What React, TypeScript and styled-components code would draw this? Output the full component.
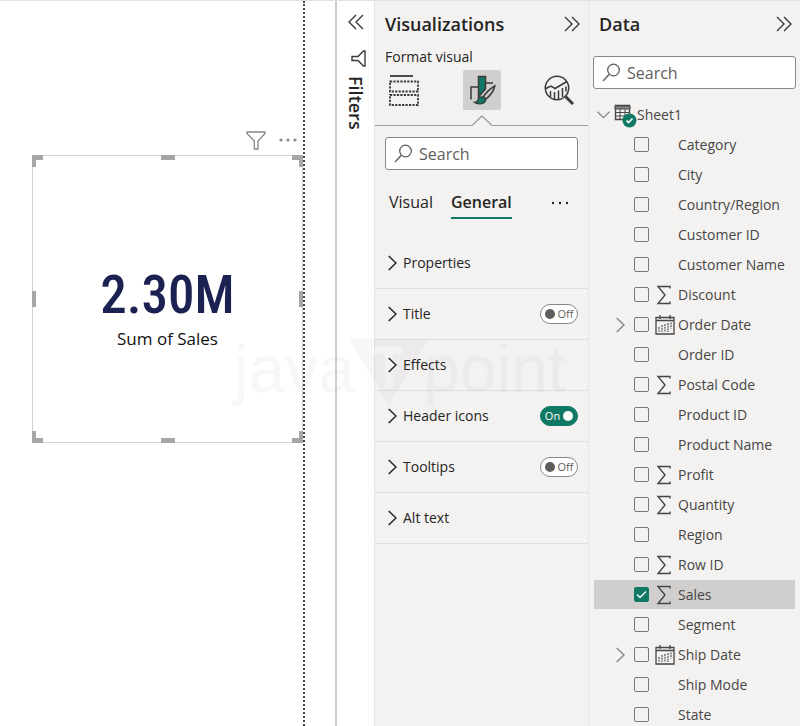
import React from "react";
import styled, { createGlobalStyle } from "styled-components";

const Global = createGlobalStyle`
  *, *::before, *::after { box-sizing: border-box; }
  body { margin: 0; background: #fff; font-family: "Open Sans", "Noto Sans", sans-serif; color: #252423; }
  button, input { font: inherit; color: inherit; }
  button { padding: 0; border: 0; background: none; cursor: pointer; }
  h2, p, ul { margin: 0; padding: 0; list-style: none; }
  svg { display: block; }
`;

const Layout = styled.div`
  position: relative;
  display: grid;
  grid-template-columns: minmax(0, 1fr) 37px 214px 212px;
  height: 100vh;
  overflow: hidden;
  border-top: 1px solid #e3e2e1;
`;

const Canvas = styled.main`
  display: flex;
  padding-right: 30px;
  border-right: 2px solid #cfcfcf;
`;

const Sheet = styled.div`
  flex: 1;
  padding: 128px 0 0 32px;
  border-right: 2px dotted #444;
`;

const VisualHeader = styled.div`
  display: flex;
  justify-content: flex-end;
  align-items: center;
  gap: 13px;
  height: 26px;
  padding: 0 6px 4px 0;
  color: #8a8886;
`;

const Card = styled.section`
  position: relative;
  display: flex;
  flex-direction: column;
  align-items: center;
  justify-content: center;
  height: 288px;
  padding-top: 20px;
  border: 1px solid #d2d2d2;
`;

const CardValue = styled.p`
  font-family: "Roboto Condensed", Roboto, sans-serif;
  font-size: 53px;
  font-weight: 500;
  line-height: 60px;
  color: #1b2150;
`;

const CardLabel = styled.p`
  font-size: 17px;
  line-height: 28px;
  color: #111;
`;

const Handle = styled.span<{ $x: string; $y: string; $w: number; $h: number; $edges?: string }>`
  position: absolute;
  ${(p) => p.$x};
  ${(p) => p.$y};
  width: ${(p) => p.$w}px;
  height: ${(p) => p.$h}px;
  border: 0 solid #a6a6a6;
  ${(p) => (p.$edges ? `border-width: ${p.$edges}` : "background: #a6a6a6")};
`;

const FiltersPane = styled.aside`
  display: flex;
  flex-direction: column;
  align-items: center;
  padding-top: 13px;
  background: #fff;
`;

const FiltersTitle = styled.h2`
  margin-top: 9px;
  writing-mode: vertical-rl;
  font-size: 18px;
  font-weight: 600;
  line-height: 22px;
`;

const FilterGlyph = styled.span`
  margin: 20px 0 0 6px;
`;

const Pane = styled.aside`
  min-height: 0;
  overflow: hidden;
  background: #f3f2f1;
  border-left: 1px solid #e6e5e4;
`;

const PaneHeader = styled.header`
  display: flex;
  align-items: center;
  justify-content: space-between;
  height: 46px;
  padding: 0 8px 0 10px;
`;

const PaneTitle = styled.h2`
  font-size: 18px;
  font-weight: 600;
  line-height: 24px;
`;

const Subtitle = styled.p`
  padding-left: 10px;
  font-size: 14px;
  line-height: 20px;
`;

const ModeBar = styled.div`
  display: flex;
  justify-content: space-between;
  align-items: center;
  margin-top: 3px;
  padding: 0 10px;
`;

const ModeButton = styled.button<{ $active?: boolean }>`
  display: grid;
  place-items: center;
  width: 38px;
  height: 40px;
  border-radius: 2px;
  background: ${(p) => (p.$active ? "#d0cfce" : "transparent")};
`;

const Divider = styled.div`
  display: flex;
  align-items: flex-end;
  margin-top: 5px;
  &::before, &::after { content: ""; flex: 1; height: 1px; background: #a19f9d; }
`;

const SearchBox = styled.label<{ $top: number; $left: number; $right: number }>`
  display: flex;
  align-items: center;
  gap: 6px;
  height: 33px;
  margin: ${(p) => p.$top}px ${(p) => p.$right}px 0 ${(p) => p.$left}px;
  padding: 0 8px;
  border: 1px solid #8a8886;
  border-radius: 3px;
  background: #fff;
  color: #605e5c;
`;

const SearchInput = styled.input`
  flex: 1;
  min-width: 0;
  padding: 0;
  border: 0;
  outline: 0;
  background: none;
  font-size: 16px;
  line-height: 22px;
  &::placeholder { color: #605e5c; opacity: 1; }
`;

const Tabs = styled.div`
  display: flex;
  align-items: center;
  gap: 18px;
  padding: 17px 19px 19px 14px;
`;

const Tab = styled.button<{ $active?: boolean }>`
  height: 32px;
  font-size: 16px;
  line-height: 28px;
  font-weight: ${(p) => (p.$active ? 600 : 400)};
  border-bottom: 2px solid ${(p) => (p.$active ? "#117865" : "transparent")};
`;

const MoreButton = styled.button`
  margin-left: auto;
`;

const Section = styled.li`
  display: flex;
  align-items: center;
  justify-content: space-between;
  height: 51px;
  padding: 0 10px 0 13px;
  border-bottom: 1px solid #e1dfdd;
`;

const SectionButton = styled.button`
  display: flex;
  align-items: center;
  gap: 6px;
  font-size: 14px;
  line-height: 20px;
`;

const Toggle = styled.button<{ $on: boolean }>`
  display: flex;
  flex-direction: ${(p) => (p.$on ? "row-reverse" : "row")};
  align-items: center;
  justify-content: center;
  gap: 3px;
  width: 38px;
  height: 20px;
  border: 1px solid ${(p) => (p.$on ? "#117865" : "#8a8886")};
  border-radius: 10px;
  background: ${(p) => (p.$on ? "#117865" : "#fff")};
  color: ${(p) => (p.$on ? "#fff" : "#605e5c")};
  font-size: 11px;
  line-height: 16px;
  &::before {
    content: "";
    width: 10px;
    height: 10px;
    border-radius: 50%;
    background: currentColor;
  }
`;

const TableButton = styled.button`
  display: flex;
  align-items: center;
  height: 30px;
  margin-top: 11px;
  padding-left: 8px;
  color: #484644;
  font-size: 14px;
  line-height: 20px;
`;

const TableChevron = styled.span`
  margin-right: 4px;
`;

const Field = styled.li<{ $selected?: boolean }>`
  display: grid;
  grid-template-columns: 12px 15px 1fr;
  align-items: center;
  column-gap: 6px;
  height: 30px;
  margin: 0 5px;
  padding-left: 22px;
  border-bottom: 1px solid transparent;
  background: ${(p) => (p.$selected ? "#d0cfcd" : "transparent")};
  background-clip: padding-box;
  color: #484644;
`;

const FieldLabel = styled.label`
  display: grid;
  grid-template-columns: 20px 1fr;
  grid-column: 3;
  align-items: center;
  column-gap: 3px;
  font-size: 14px;
  line-height: 20px;
  white-space: nowrap;
`;

const Checkbox = styled.input`
  appearance: none;
  grid-column: 2;
  width: 15px;
  height: 15px;
  margin: 0;
  border: 1px solid #7a7876;
  border-radius: 2px;
  &:checked {
    border-color: #117865;
    background: #117865 url("data:image/svg+xml,%3Csvg xmlns='http://www.w3.org/2000/svg' viewBox='0 0 13 13'%3E%3Cpath d='M2 6.5l3 3 6-6' fill='none' stroke='white' stroke-width='1.3'/%3E%3C/svg%3E") center / 13px no-repeat;
  }
`;

const Watermark = styled.div`
  position: absolute;
  top: 332px;
  left: 50%;
  display: flex;
  align-items: flex-start;
  transform: translateX(-50%);
  font-family: "Liberation Sans", Arial, sans-serif;
  font-size: 66px;
  line-height: 72px;
  color: #503c50;
  opacity: 0.035;
  pointer-events: none;
`;

const WatermarkMark = styled.svg`
  margin: 2px -6px 0;
`;

const DoubleChevron = ({ left = false }: { left?: boolean }) => (
  <svg width="16" height="16" viewBox="0 0 16 16" fill="none" stroke="#3b3a39" strokeWidth="1.4">
    <path d={left ? "M8 1L1 8l7 7M15 1L8 8l7 7" : "M1 1l7 7-7 7M8 1l7 7-7 7"} />
  </svg>
);

const Chevron = ({ color = "#252423" }: { color?: string }) => (
  <svg width="9" height="16" viewBox="0 0 9 16" fill="none" stroke={color} strokeWidth="1.5">
    <path d="M.7 1L8 8 .7 15" />
  </svg>
);

const Funnel = () => (
  <svg width="20" height="19" viewBox="0 0 20 19" fill="none" stroke="currentColor" strokeWidth="1.3">
    <path d="M1 1h18v1.5L12 10v8H8.3v-8L1 2.5z" />
  </svg>
);

const Dots = ({ r = 1.2 }: { r?: number }) => (
  <svg width="18" height="4" viewBox="0 0 18 4" fill="currentColor">
    <circle cx="2" cy="2" r={r} />
    <circle cx="9" cy="2" r={r} />
    <circle cx="16" cy="2" r={r} />
  </svg>
);

const SearchIcon = () => (
  <svg width="19" height="19" viewBox="0 0 19 19" fill="none" stroke="#605e5c" strokeWidth="1.3">
    <circle cx="11.5" cy="7" r="5.8" />
    <path d="M7.3 11.2L1 18" />
  </svg>
);

const BuildIcon = () => (
  <svg width="30" height="32" viewBox="0 0 30 32" fill="none" stroke="#3b3a39">
    <path d="M1 2h23" strokeWidth="1.8" />
    <path d="M1 7.5h28v10H1zM1 21h28v10H1z" strokeWidth="1.8" strokeDasharray="2.2 1.25" />
  </svg>
);

const FormatIcon = () => (
  <svg width="28" height="32" viewBox="0 0 28 32" fill="none" stroke="#3b3a39" strokeWidth="1.5">
    <path d="M3 25.5V13h7M17 9h8" />
    <path d="M10.5 2.5h7V15l-7 8z" fill="#117865" />
    <path d="M26.8 12c-4.500 2.500-8.500 6.500-11.300 10.500l2.500 2.500c4-3.200 7.800-8 8.800-13z" fill="#d0cfce" />
    <path d="M15.500 23c-3-.8-5 .8-5.600 3-.4 1.500-1.600 2.300-3.600 2.300 3.500 2.500 11.700 2.200 11.500-3z" fill="#117865" strokeWidth="1.2" />
  </svg>
);

const AnalyticsIcon = () => (
  <svg width="30" height="32" viewBox="0 0 30 32" fill="none" stroke="#3b3a39" strokeWidth="1.5">
    <circle cx="13" cy="14" r="11.7" />
    <path d="M2 14.5l5-2.500 4 2.500L23 7.500" />
    <path d="M6.500 17v6M10.500 18v7.500M14.500 16.500v8.500M18.500 14v9M22 12.500v5" />
    <path d="M21.500 22.500l7.500 7.500" strokeWidth="3" />
  </svg>
);

const TableIcon = () => (
  <svg width="23" height="26" viewBox="0 -1 23 26" fill="none" stroke="#484644">
    <path d="M1.5 2.5h14v14h-14z" strokeWidth="1.4" />
    <path d="M1 3h15v3H1z" fill="#8a8886" />
    <path d="M1.5 9.5h14M1.5 13h14M6 6v10M11 6v10" />
    <circle cx="15.5" cy="17.5" r="7" fill="#117865" stroke="none" />
    <path d="M12.5 17.5l2 2 4-4" stroke="#fff" strokeWidth="1.7" />
  </svg>
);

const Sigma = () => (
  <svg width="20" height="20" viewBox="0 0 20 20" fill="none" stroke="#484644" strokeWidth="1.4">
    <path d="M15 3.5v-2H3l7 8.500-7 8.500h12v-2" />
  </svg>
);

const Calendar = () => (
  <svg width="20" height="20" viewBox="0 0 20 20" fill="none" stroke="#484644" strokeWidth="1.3">
    <path d="M1 2.5h18V19H1zM1 5.5h18M5 0v4M15 0v4" />
    <path d="M4 12v5M7 10v7M10 9v8M13 8v9M16 7.5v6" strokeWidth="1.1" strokeDasharray="2 .7" />
  </svg>
);

const handles: [string, string, number, number, string?][] = [
  ["left: -1px", "top: -1px", 11, 12, "5px 0 0 4px"],
  ["right: -1px", "top: -1px", 11, 12, "5px 4px 0 0"],
  ["left: -1px", "bottom: -1px", 11, 12, "0 0 5px 4px"],
  ["right: -1px", "bottom: -1px", 11, 12, "0 4px 5px 0"],
  ["left: calc(50% - 7px)", "top: -1px", 14, 5],
  ["left: calc(50% - 7px)", "bottom: -1px", 14, 5],
  ["left: -1px", "top: calc(50% - 8px)", 4, 16],
  ["right: -1px", "top: calc(50% - 8px)", 4, 16],
];

const sections: { name: string; on?: boolean }[] = [
  { name: "Properties" },
  { name: "Title", on: false },
  { name: "Effects" },
  { name: "Header icons", on: true },
  { name: "Tooltips", on: false },
  { name: "Alt text" },
];

const fields: { name: string; kind?: "sum" | "date" }[] = [
  { name: "Category" },
  { name: "City" },
  { name: "Country/Region" },
  { name: "Customer ID" },
  { name: "Customer Name" },
  { name: "Discount", kind: "sum" },
  { name: "Order Date", kind: "date" },
  { name: "Order ID" },
  { name: "Postal Code", kind: "sum" },
  { name: "Product ID" },
  { name: "Product Name" },
  { name: "Profit", kind: "sum" },
  { name: "Quantity", kind: "sum" },
  { name: "Region" },
  { name: "Row ID", kind: "sum" },
  { name: "Sales", kind: "sum" },
  { name: "Segment" },
  { name: "Ship Date", kind: "date" },
  { name: "Ship Mode" },
  { name: "State" },
];

function Search({ top, left, right }: { top: number; left: number; right: number }) {
  return (
    <SearchBox $top={top} $left={left} $right={right}>
      <SearchIcon />
      <SearchInput type="text" placeholder="Search" aria-label="Search" />
    </SearchBox>
  );
}

export default function App() {
  const [toggles, setToggles] = React.useState<Record<string, boolean>>(
    Object.fromEntries(sections.map((s) => [s.name, !!s.on])),
  );
  const [checked, setChecked] = React.useState<Record<string, boolean>>({ Sales: true });

  return (
    <Layout>
      <Global />
      <Canvas>
        <Sheet>
          <VisualHeader>
            <button aria-label="Filters on this visual"><Funnel /></button>
            <button aria-label="More options"><Dots r={1.6} /></button>
          </VisualHeader>
          <Card>
            <CardValue>2.30M</CardValue>
            <CardLabel>Sum of Sales</CardLabel>
            {handles.map(([x, y, w, h, edges]) => (
              <Handle key={x + y} $x={x} $y={y} $w={w} $h={h} $edges={edges} />
            ))}
          </Card>
        </Sheet>
      </Canvas>

      <FiltersPane>
        <button aria-label="Expand filters"><DoubleChevron left /></button>
        <FilterGlyph>
          <svg width="15" height="17" viewBox="0 0 15 17" fill="none" stroke="#3b3a39" strokeWidth="1.4">
            <path d="M14 1v15h-1.5L7 10.5H1v-4h6L12.5 1z" />
          </svg>
        </FilterGlyph>
        <FiltersTitle>Filters</FiltersTitle>
      </FiltersPane>

      <Pane>
        <PaneHeader>
          <PaneTitle>Visualizations</PaneTitle>
          <button aria-label="Collapse visualizations"><DoubleChevron /></button>
        </PaneHeader>
        <Subtitle>Format visual</Subtitle>
        <ModeBar>
          <ModeButton aria-label="Build visual"><BuildIcon /></ModeButton>
          <ModeButton aria-label="Format visual" $active><FormatIcon /></ModeButton>
          <ModeButton aria-label="Analytics"><AnalyticsIcon /></ModeButton>
        </ModeBar>
        <Divider>
          <svg width="20" height="11" viewBox="0 0 20 11" fill="none" stroke="#a19f9d" strokeWidth="1.3">
            <path d="M0 10.5L10 1l10 9.5" />
          </svg>
        </Divider>
        <Search top={11} left={10} right={10} />
        <Tabs>
          <Tab>Visual</Tab>
          <Tab $active>General</Tab>
          <MoreButton aria-label="More options"><Dots /></MoreButton>
        </Tabs>
        <ul>
          {sections.map((s) => (
            <Section key={s.name}>
              <SectionButton><Chevron />{s.name}</SectionButton>
              {s.on !== undefined && (
                <Toggle
                  role="switch"
                  aria-label={s.name}
                  aria-checked={toggles[s.name]}
                  $on={toggles[s.name]}
                  onClick={() => setToggles({ ...toggles, [s.name]: !toggles[s.name] })}
                >
                  {toggles[s.name] ? "On" : "Off"}
                </Toggle>
              )}
            </Section>
          ))}
        </ul>
      </Pane>

      <Pane>
        <PaneHeader>
          <PaneTitle>Data</PaneTitle>
          <button aria-label="Collapse data"><DoubleChevron /></button>
        </PaneHeader>
        <Search top={9} left={4} right={4} />
        <TableButton>
          <TableChevron>
            <svg width="13" height="8" viewBox="0 0 13 8" fill="none" stroke="#8a8886" strokeWidth="1.3">
              <path d="M.5 .7l6 6 6-6" />
            </svg>
          </TableChevron>
          <TableIcon />
          Sheet1
        </TableButton>
        <ul>
          {fields.map((f) => (
            <Field key={f.name} $selected={!!checked[f.name]}>
              {f.kind === "date" && <button aria-label={`Expand ${f.name}`}><Chevron color="#8a8886" /></button>}
              <Checkbox
                type="checkbox"
                id={f.name}
                checked={!!checked[f.name]}
                onChange={() => setChecked({ ...checked, [f.name]: !checked[f.name] })}
              />
              <FieldLabel htmlFor={f.name}>
                <span>{f.kind === "sum" ? <Sigma /> : f.kind === "date" ? <Calendar /> : null}</span>
                {f.name}
              </FieldLabel>
            </Field>
          ))}
        </ul>
      </Pane>

      <Watermark>
        <span>java</span>
        <WatermarkMark width="80" height="70" viewBox="0 0 80 70" fill="currentColor">
          <path d="M0 4h80L40 70zM24 12v7h12v34h8V19h10v-7z" fillRule="evenodd" />
        </WatermarkMark>
        <span>point</span>
      </Watermark>
    </Layout>
  );
}
